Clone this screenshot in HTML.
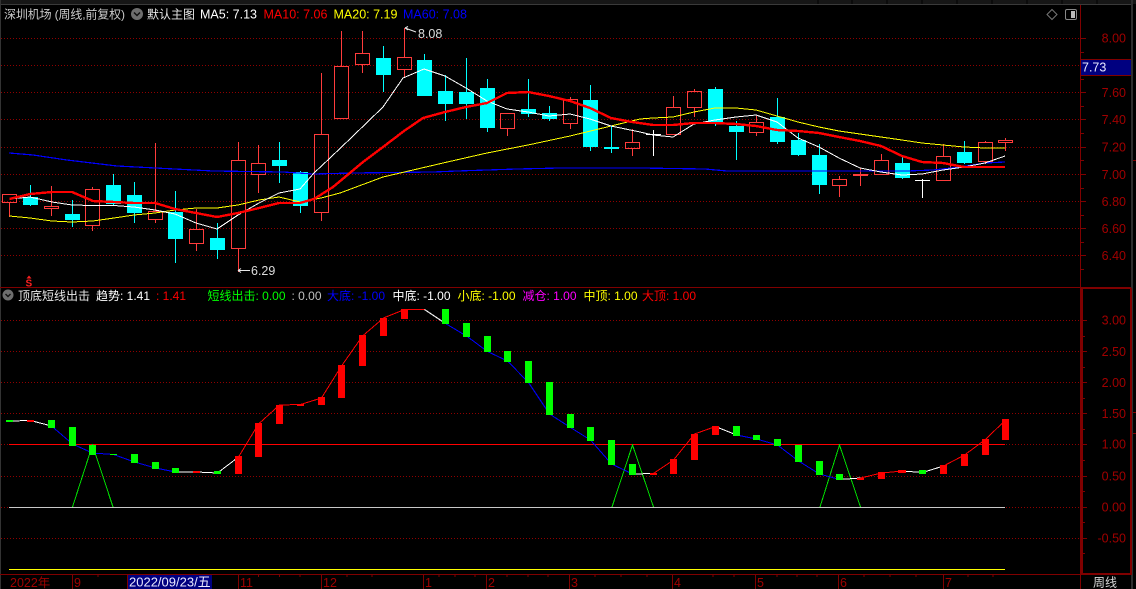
<!DOCTYPE html>
<html><head><meta charset="utf-8"><style>
html,body{margin:0;padding:0;background:#000;width:1136px;height:589px;overflow:hidden}
svg{display:block}
text{font-family:"Liberation Sans","Noto Sans CJK SC",sans-serif;font-size:12.5px}
.ax{fill:#a00000;font-size:12.5px}
.bx{fill:#a00000}
.c{font-size:12px}
</style></head><body>
<svg width="1136" height="589" viewBox="0 0 1136 589" xmlns="http://www.w3.org/2000/svg">
<rect width="1136" height="589" fill="#000"/>
<g shape-rendering="crispEdges">
<!-- top bar -->
<rect x="0" y="0" width="1136" height="4" fill="#161616"/>
<rect x="0" y="4" width="1132" height="1" fill="#3a3a3a"/>
<path d="M818 0v4M852 0v4M887 0v4M922 0v4M957 0v4M992 0v4M1027 0v4M1062 0v4M1097 0v4" stroke="#000" stroke-width="1"/>
<rect x="0" y="0" width="1" height="589" fill="#333"/>
<rect x="1131" y="0" width="2" height="589" fill="#2e2e2e"/>
<!-- grid -->
<path d="M1 38.5H1081M1 65.5H1081M1 92.5H1081M1 119.5H1081M1 147.5H1081M1 174.5H1081M1 201.5H1081M1 228.5H1081M1 255.5H1081M1 320.5H1081M1 351.5H1081M1 382.5H1081M1 413.5H1081M1 444.5H1081M1 476.5H1081M1 507.5H1081M1 538.5H1081" stroke="#900000" stroke-width="1" stroke-dasharray="1 2" fill="none"/>
<!-- frame -->
<rect x="0" y="287" width="1081" height="1" fill="#800000"/>
<rect x="1080" y="5" width="1" height="584" fill="#800000"/>
<rect x="1081" y="287" width="50" height="2" fill="#800000"/>
<rect x="1081" y="288" width="2" height="287" fill="#800000"/>
<rect x="1130" y="288" width="2" height="287" fill="#800000"/>
<rect x="0" y="574" width="1081" height="1" fill="#800000"/>
<rect x="1081" y="573" width="50" height="2" fill="#800000"/>
<!-- axis ticks -->
<path d="M1081 38.5h5M1081 52.5h3M1081 79.5h3M1081 92.5h5M1081 106.5h3M1081 119.5h5M1081 133.5h3M1081 147.5h5M1081 160.5h3M1081 174.5h5M1081 188.5h3M1081 201.5h5M1081 215.5h3M1081 228.5h5M1081 242.5h3M1081 255.5h5M1081 269.5h3M1083 320.5h4M1083 336.5h2M1083 351.5h4M1083 367.5h2M1083 382.5h4M1083 398.5h2M1083 413.5h4M1083 429.5h2M1083 444.5h4M1083 460.5h2M1083 476.5h4M1083 491.5h2M1083 507.5h4M1083 522.5h2M1083 538.5h4M1083 553.5h2" stroke="#800000" fill="none"/>
<path d="M1133 160.5h3M1133 412.5h3M1133 433.5h3" stroke="#800000" fill="none"/>
<!-- price box -->
<rect x="1081" y="60" width="50" height="15" fill="#000080"/>
<path d="M1081 59.5h50M1081 75.5h50" stroke="#800000" fill="none"/>
<!-- red candle wicks -->
<path d="M9.5 202v15M51.5 186v20M51.5 209v7M92.5 187v3M92.5 226v5M155.5 143v69M155.5 220v3M196.5 209v21M196.5 244v7M238.5 142v19M238.5 249v23M258.5 145v19M258.5 175v18M321.5 73v62M321.5 213v8M341.5 31v36M362.5 31v23M362.5 65v8M404.5 28v30M404.5 70v8M507.5 129v7M570.5 97v3M570.5 124v5M632.5 129v14M632.5 149v7M673.5 96v12M694.5 89v3M694.5 108v9M756.5 116v7M756.5 133v3M839.5 176v4M839.5 186v11M860.5 168v18M881.5 154v7M943.5 144v13M985.5 141v2M985.5 162v2M1005.5 138v3M1005.5 143v8" stroke="#ff3c3c" fill="none"/>
<!-- hollow red bodies -->
<path d="M2.5 194.5h14v8h-14zM44.5 206.5h14v2h-14zM85.5 189.5h14v36h-14zM148.5 211.5h14v8h-14zM189.5 229.5h14v14h-14zM231.5 160.5h14v88h-14zM251.5 163.5h14v11h-14zM314.5 134.5h14v78h-14zM334.5 66.5h14v52h-14zM355.5 53.5h14v11h-14zM397.5 57.5h14v12h-14zM500.5 113.5h14v15h-14zM563.5 99.5h14v24h-14zM625.5 142.5h14v6h-14zM666.5 107.5h14v27h-14zM687.5 91.5h14v16h-14zM749.5 122.5h14v10h-14zM832.5 179.5h14v6h-14zM874.5 160.5h14v14h-14zM936.5 156.5h14v24h-14zM978.5 142.5h14v19h-14zM998.5 140.5h14v2h-14z" stroke="#ff3c3c" fill="none"/>
<rect x="853" y="174" width="15" height="2" fill="#ff3c3c"/>
<!-- cyan wicks -->
<path d="M30.5 185v21M72.5 200v27M113.5 174v31M134.5 182v41M175.5 191v72M217.5 223v36M279.5 142v41M300.5 171v42M383.5 46v46M424.5 54v42M445.5 75v46M466.5 58v61M487.5 79v53M528.5 79v38M549.5 106v15M590.5 85v66M611.5 126v27M715.5 87v39M736.5 121v39M777.5 98v46M798.5 133v23M819.5 144v50M902.5 157v22M964.5 141v23" stroke="#00ffff" fill="none"/>
<!-- cyan bodies -->
<path fill="#00ffff" d="M23 197h15v8h-15zM65 214h15v6h-15zM106 185h15v19h-15zM127 195h15v18h-15zM168 212h15v27h-15zM210 238h15v12h-15zM272 160h15v6h-15zM293 172h15v34h-15zM376 58h15v17h-15zM417 60h15v36h-15zM438 91h15v13h-15zM459 92h15v12h-15zM480 88h15v40h-15zM521 109h15v5h-15zM542 113h15v6h-15zM583 100h15v47h-15zM604 147h15v2h-15zM708 89h15v34h-15zM729 126h15v6h-15zM770 117h15v25h-15zM791 140h15v15h-15zM812 155h15v30h-15zM895 163h15v15h-15zM957 152h15v11h-15z"/>
<!-- white doji -->
<path d="M653.5 130v26M646 134.5h15M922.5 179v19M915 180.5h15" stroke="#fff" fill="none"/>
</g>
<!-- MA lines -->
<g fill="none" shape-rendering="crispEdges">
<polyline stroke="#0000ff" stroke-width="1.2" points="9,153 33,155 67,160 117,166 213,171 283,172 313,174 353,173 433,172 457,171 517,169 560,168 640,168 705,169 727,171 767,171 907,171 933,170 960,167 985,163 1005,162"/>
<polyline stroke="#ffff00" stroke-width="1" points="9.5,216 30,218 52,221 72,222 93,221 114,218 134,215 155,213 175,210 196,208 217,208 238,205 259,200 279,197 300,202 321,198 340,193 383,177 443,163 487,153 528,145 570,136 611,126 640,119 653,118 673,117 694,112 715,108 736,108 756,110 777,116 798,122 819,127 839,131 860,134 881,137 902,140 922,143 943,145 964,147 985,148 1005,148"/>
<polyline stroke="#ffffff" stroke-width="1" points="9.5,199 30,197 52,202 72,205 93,205.5 114,205.5 134,207 155,210 175,214 196,223 217,229 238,215 259,203 279,193 300,189 314,173 330,158 352,137 383,107 403,78 424,69 445,76 466,88 487,101 507,109 528,112 549,116 570,114 590,119 611,126 640,132 653,135 673,137 694,124 715,120 736,117 756,115 777,122 798,138 819,147 839,158 860,168 881,172 902,175 922,174 943,170 964,167 985,163 1005,156"/>
<polyline stroke="#ff0000" stroke-width="2.4" points="9.5,199 30,194 52,192 72,192 93,201 114,202 134,203 155,203 175,209 196,213 217,217 238,213 259,208 279,203 300,203 314,199 333,187 363,162 383,147 404,131 423,118 445,112 466,107 487,103 507,93 528,92 549,96 570,101 590,108 611,118 632,122 653,125 673,125 694,123 715,123 736,124 756,126 777,130 798,131 819,133 839,137 860,141 881,146 902,156 922,162 943,163 964,167 985,167 1005,167"/>
</g>
<!-- hi/lo markers -->
<path d="M405 28l11 4M405 28l3-1.5M405 28l3 2M238 270.5h12M238 270.5l3-2M238 270.5l3 2" stroke="#e8e8e8" stroke-width="1" fill="none"/>
<text x="418" y="38" fill="#dcdcdc" font-size="12">8.08</text>
<text x="251" y="275" fill="#dcdcdc">6.29</text>
<!-- S marker -->
<path d="M26.5 278.5l2.5-3 2.5 3z" fill="#ff2020"/>
<text x="25.5" y="286.5" fill="#ff2020" style="font-size:10px;font-weight:bold">S</text>
<!-- top-right icons -->
<path d="M1052 9.5l5 5-5 5-5-5z" fill="none" stroke="#777"/>
<rect x="1065.5" y="9.5" width="11" height="10" rx="1.5" fill="none" stroke="#888"/>
<rect x="1071" y="11" width="4" height="7" fill="#bbb"/>
<!-- legend main -->
<text x="4" y="18.5" fill="#c8c8c8" textLength="121" style="font-size:12px">深圳机场 (周线,前复权)</text>
<circle cx="137" cy="14" r="6" fill="#6e6e6e"/>
<path d="M134 12.5l3 3 3-3" stroke="#111" stroke-width="1.5" fill="none"/>
<text x="147" y="18.5" fill="#e8e8e8" style="font-size:12px">默认主图</text>
<text x="200" y="18.5" fill="#fff">MA5: 7.13</text>
<text x="263.5" y="18.5" fill="#f00">MA10: 7.06</text>
<text x="333.5" y="18.5" fill="#ff0">MA20: 7.19</text>
<text x="403" y="18.5" fill="#00f">MA60: 7.08</text>
<!-- axis labels -->
<text class="ax" text-anchor="end" x="1126" y="42.5">8.00</text>
<text class="ax" text-anchor="end" x="1126" y="97">7.60</text>
<text class="ax" text-anchor="end" x="1126" y="124">7.40</text>
<text class="ax" text-anchor="end" x="1126" y="151.5">7.20</text>
<text class="ax" text-anchor="end" x="1126" y="179">7.00</text>
<text class="ax" text-anchor="end" x="1126" y="206">6.80</text>
<text class="ax" text-anchor="end" x="1126" y="233">6.60</text>
<text class="ax" text-anchor="end" x="1126" y="260">6.40</text>
<text x="1082" y="71.5" fill="#e8e8ff" style="font-size:12.5px">7.73</text>
<text class="ax" text-anchor="end" x="1126" y="324.5">3.00</text>
<text class="ax" text-anchor="end" x="1126" y="356">2.50</text>
<text class="ax" text-anchor="end" x="1126" y="387">2.00</text>
<text class="ax" text-anchor="end" x="1126" y="418">1.50</text>
<text class="ax" text-anchor="end" x="1126" y="448.5">1.00</text>
<text class="ax" text-anchor="end" x="1126" y="480.5">0.50</text>
<text class="ax" text-anchor="end" x="1126" y="511.5">0.00</text>
<text class="ax" text-anchor="end" x="1126" y="542.5">-0.50</text>
<!-- sub legend -->
<circle cx="8" cy="295" r="5.5" fill="#6e6e6e"/>
<path d="M5.5 294l2.5 2.5 2.5-2.5" stroke="#111" stroke-width="1.4" fill="none"/>
<text x="18" y="300" fill="#e8e8e8" style="font-size:12px">顶底短线出击</text>
<text x="96" y="300" fill="#fff" style="font-size:12px">趋势: 1.41</text>
<text x="156" y="300" fill="#f00" style="font-size:12px">: 1.41</text>
<text x="207.5" y="300" fill="#0f0" style="font-size:12px">短线出击: 0.00</text>
<text x="291.5" y="300" fill="#c0c0c0" style="font-size:12px">: 0.00</text>
<text x="327" y="300" fill="#00f" style="font-size:12px">大底: -1.00</text>
<text x="392.5" y="300" fill="#fff" style="font-size:12px">中底: -1.00</text>
<text x="457.5" y="300" fill="#ff0" style="font-size:12px">小底: -1.00</text>
<text x="522.5" y="300" fill="#f0f" style="font-size:12px">减仓: 1.00</text>
<text x="583.5" y="300" fill="#ff0" style="font-size:12px">中顶: 1.00</text>
<text x="642" y="300" fill="#f00" style="font-size:12px">大顶: 1.00</text>
<!-- sub chart -->
<g shape-rendering="crispEdges">
<rect x="9" y="444" width="996" height="1" fill="#ff0000"/>
<rect x="9" y="507" width="996" height="1" fill="#c8c8c8"/>
<rect x="9" y="569" width="996" height="1" fill="#ffff00"/>
</g>
<g fill="none" stroke="#00e000" stroke-width="1" shape-rendering="crispEdges">
<polyline points="72.5,507 92.5,445 113,507"/>
<polyline points="612,507 632.5,445 653.5,507"/>
<polyline points="820,507 839.5,445 860.5,507"/>
</g>
<g fill="none" shape-rendering="crispEdges" stroke-width="1">
<polyline stroke="#fff" points="9.5,421 30.5,420.5 51.5,426"/>
<polyline stroke="#0000ff" points="51.5,426 72.5,444 92.5,453 113.5,454.5 134.5,462 155.5,468 175.5,472"/>
<polyline stroke="#fff" points="175.5,472 196.5,472 217.5,473 238.5,457"/>
<polyline stroke="#ff0000" points="238.5,457 258.5,424 279.5,405 300.5,404.5 321.5,398 341.5,366 362.5,336 383.5,318 404.5,309.5 424.5,309.5"/>
<polyline stroke="#fff" points="424.5,309.5 445.5,323.5"/>
<polyline stroke="#0000ff" points="445.5,323.5 466.5,336 487.5,351.5 507.5,361 528.5,382.5 549.5,414 570.5,427.5 590.5,440 611.5,464 632.5,474"/>
<polyline stroke="#fff" points="632.5,474 653.5,473.5"/>
<polyline stroke="#ff0000" points="653.5,473.5 673.5,460 694.5,434 715.5,426.5"/>
<polyline stroke="#fff" points="715.5,426.5 736.5,435"/>
<polyline stroke="#0000ff" points="736.5,435 756.5,439 777.5,445 798.5,461 819.5,474 839.5,479.5"/>
<polyline stroke="#fff" points="839.5,479.5 860.5,478"/>
<polyline stroke="#ff0000" points="860.5,478 881.5,473 902.5,471"/>
<polyline stroke="#fff" points="902.5,471 922.5,472.5 943.5,466"/>
<polyline stroke="#ff0000" points="943.5,466 964.5,455 985.5,439.5 1005.5,420"/>
</g>
<g shape-rendering="crispEdges">
<path fill="#00ff00" d="M6 420h7v2h-7zM48 420h7v8h-7zM69 427h7v19h-7zM89 445h7v10h-7zM110 454h7v1h-7zM131 454h7v9h-7zM152 462h7v7h-7zM172 468h7v5h-7zM214 471h7v3h-7zM442 309h7v15h-7zM463 323h7v14h-7zM484 336h7v16h-7zM504 351h7v11h-7zM525 361h7v22h-7zM546 382h7v33h-7zM567 414h7v14h-7zM587 427h7v14h-7zM608 440h7v25h-7zM629 464h7v11h-7zM733 426h7v10h-7zM753 435h7v5h-7zM774 439h7v7h-7zM795 445h7v17h-7zM816 461h7v14h-7zM836 474h7v6h-7zM919 470h7v4h-7z"/>
<path fill="#ff0000" d="M27 420h7v2h-7zM193 471h7v2h-7zM235 456h7v18h-7zM255 423h7v34h-7zM276 405h7v19h-7zM297 404h7v2h-7zM318 397h7v8h-7zM338 365h7v33h-7zM359 335h7v31h-7zM380 318h7v18h-7zM401 309h7v10h-7zM650 473h7v2h-7zM670 459h7v15h-7zM691 434h7v26h-7zM712 426h7v9h-7zM857 478h7v2h-7zM878 472h7v7h-7zM898 470h8v3h-8zM940 465h7v9h-7zM961 454h7v12h-7zM982 439h7v16h-7zM1002 419h7v21h-7z"/>
<!-- bottom axis -->
<path d="M72.5 575v14M238.5 575v14M321.5 575v14M423.5 575v14M486.5 575v14M569.5 575v14M672.5 575v14M755.5 575v14M838.5 575v14M943.5 575v14M1080.5 575v14" stroke="#800000" fill="none"/>
<path d="M98 575v2M150 575v2M258.5 575v2M279.5 575v2M300 575v2M347 575v2M372 575v2M439 575v2M455 575v2M475 575v2M507 575v2M528 575v2M548 575v2M595 575v2M621 575v2M647 575v2M713 575v2M734 575v2M777 575v2M797 575v2M817 575v2M864 575v2M890 575v2M916 575v2M968 575v2M993 575v2" stroke="#800000" fill="none"/>
<rect x="127" y="575" width="85" height="14" fill="#000080"/>
<path d="M127.5 575v14" stroke="#800000" fill="none"/>
</g>
<text class="bx" x="10" y="587">2022年</text>
<text class="bx" x="74" y="587">9</text>
<text class="bx" x="240" y="587">11</text>
<text class="bx" x="323" y="587">12</text>
<text class="bx" x="425" y="587">1</text>
<text class="bx" x="488" y="587">2</text>
<text class="bx" x="571" y="587">3</text>
<text class="bx" x="674" y="587">4</text>
<text class="bx" x="757" y="587">5</text>
<text class="bx" x="840" y="587">6</text>
<text class="bx" x="945" y="587">7</text>
<text x="129" y="586.5" fill="#e8e8ff" style="font-size:13px">2022/09/23/五</text>
<text x="1093" y="586.5" fill="#d8d8d8" style="font-size:12px">周线</text>
</svg>
</body></html>
